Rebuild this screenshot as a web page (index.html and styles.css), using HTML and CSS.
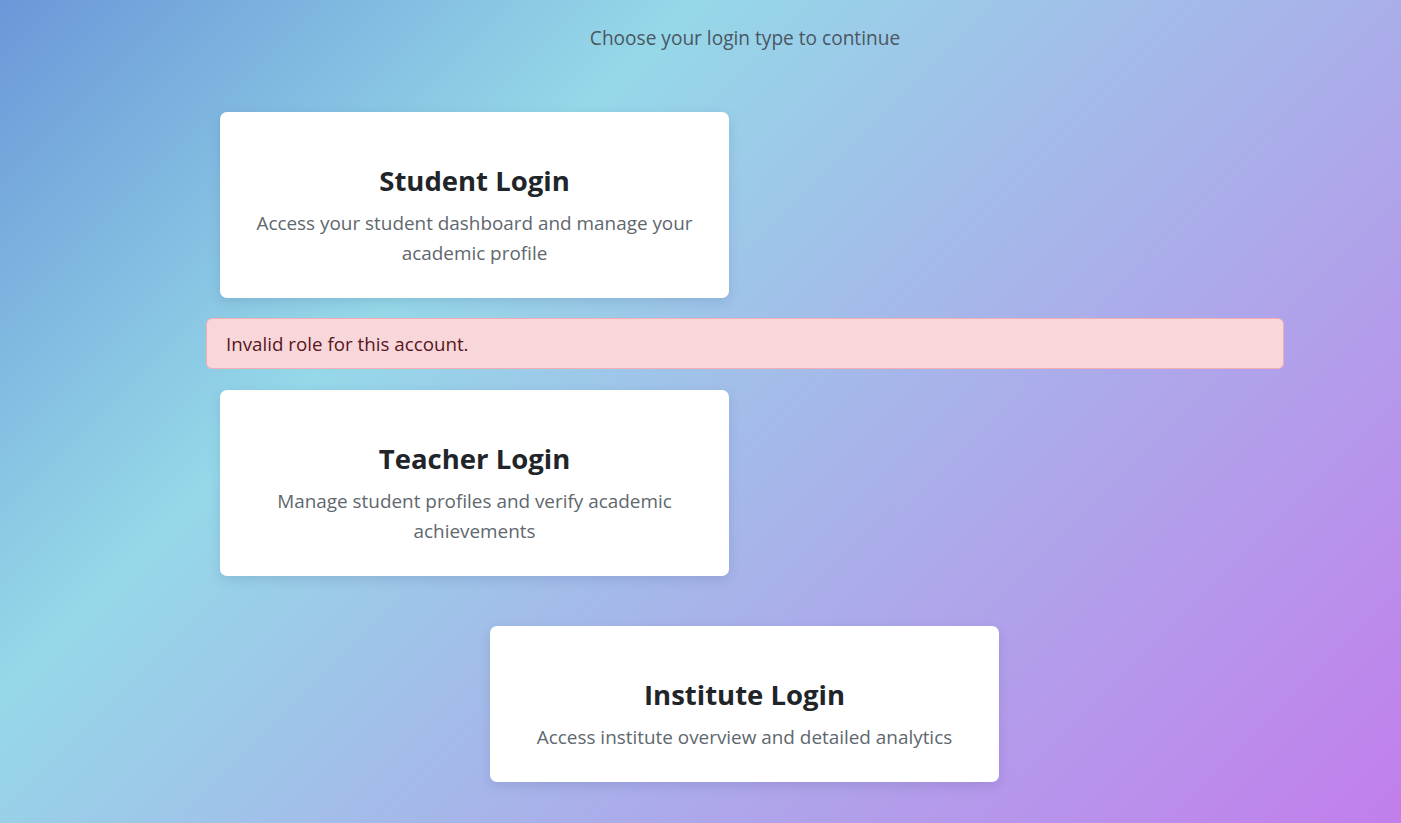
FILE: index.html
```html
<!DOCTYPE html>
<html lang="en">
<head>
<meta charset="utf-8">
<title>Choose login type</title>
<link rel="stylesheet" href="styles.css">
</head>
<body>
<main class="page">
  <p class="subtitle">Choose your login type to continue</p>
  <div class="row row-first">
    <div class="col">
      <div class="card">
        <h3 class="card-title">Student Login</h3>
        <p class="card-text">Access your student dashboard and manage your academic profile</p>
      </div>
    </div>
  </div>
  <div class="alert">Invalid role for this account.</div>
  <div class="row">
    <div class="col">
      <div class="card">
        <h3 class="card-title">Teacher Login</h3>
        <p class="card-text">Manage student profiles and verify academic achievements</p>
      </div>
    </div>
  </div>
  <div class="row row-center">
    <div class="col">
      <div class="card">
        <h3 class="card-title">Institute Login</h3>
        <p class="card-text">Access institute overview and detailed analytics</p>
      </div>
    </div>
  </div>
</main>
</body>
</html>
```
FILE: styles.css
```css
html, body {
  margin: 0;
  padding: 0;
  height: 100%;
}
body {
  font-family: "Open Sans", "Noto Sans", sans-serif;
  background: linear-gradient(135deg, #6b97d8 0%, #95d8e8 31%, #c27eec 100%);
  overflow: hidden;
}
.page {
  width: 1078px;
  margin-left: 206px;
  padding-top: 24px;
  display: flex;
  flex-direction: column;
}
.subtitle {
  margin: 0;
  text-align: center;
  font-size: 19.1px;
  line-height: 29px;
  color: #4a5662;
}
.row {
  display: flex;
}
.row-first {
  margin-top: 59px;
}
.row-center {
  padding-left: 270px;
  margin-top: 50px;
}
.col {
  width: 537px;
  box-sizing: border-box;
  padding: 0 14px;
}
.card {
  background: #fff;
  border-radius: 7px;
  box-shadow: 0 4px 12px rgba(40, 60, 110, 0.14);
  padding: 52px 32px 30px;
  text-align: center;
}
.card-title {
  margin: 0 0 11px;
  font-size: 27.5px;
  line-height: 33px;
  font-weight: 700;
  color: #212529;
}
.card-text {
  margin: 0;
  font-size: 18.9px;
  line-height: 30px;
  color: #60676e;
}
.alert {
  margin: 20px 0 21px;
  background: #f8d7da;
  border: 1px solid #f1aeb5;
  border-radius: 6px;
  padding: 11px 19px;
  font-size: 18.75px;
  line-height: 27px;
  color: #58151c;
}
```
